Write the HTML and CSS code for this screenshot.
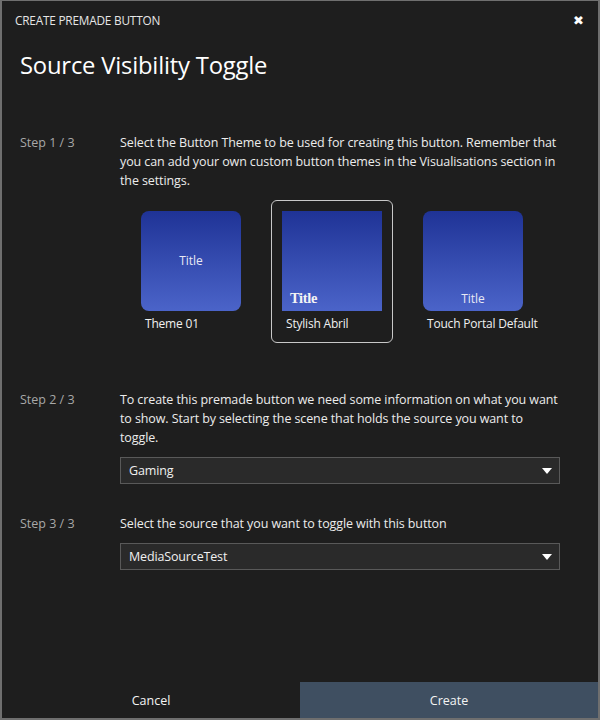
FILE: index.html
```html
<!DOCTYPE html>
<html>
<head>
<meta charset="utf-8">
<link rel="stylesheet" href="styles.css">
</head>
<body>
<div class="window">
  <div class="titlebar">
    <span class="wtitle">CREATE PREMADE BUTTON</span>
    <span class="close">✖</span>
  </div>
  <h1 class="heading">Source Visibility Toggle</h1>
  <div class="content">
    <div class="step step1">
      <div class="label">Step 1 / 3</div>
      <div class="body">
        <p class="text">Select the Button Theme to be used for creating this button. Remember that you can add your own custom button themes in the Visualisations section in the settings.</p>
        <div class="themes">
          <div class="theme">
            <div class="preview rounded center"><span class="ptitle">Title</span></div>
            <div class="tname">Theme 01</div>
          </div>
          <div class="theme selected">
            <div class="preview square abril"><span class="ptitle serif">Title</span></div>
            <div class="tname">Stylish Abril</div>
          </div>
          <div class="theme">
            <div class="preview rounded bottom"><span class="ptitle">Title</span></div>
            <div class="tname">Touch Portal Default</div>
          </div>
        </div>
      </div>
    </div>
    <div class="step step2">
      <div class="label">Step 2 / 3</div>
      <div class="body">
        <p class="text">To create this premade button we need some information on what you want to show. Start by selecting the scene that holds the source you want to toggle.</p>
        <div class="select"><span>Gaming</span><span class="arrow"></span></div>
      </div>
    </div>
    <div class="step step3">
      <div class="label">Step 3 / 3</div>
      <div class="body">
        <p class="text">Select the source that you want to toggle with this button</p>
        <div class="select"><span>MediaSourceTest</span><span class="arrow"></span></div>
      </div>
    </div>
  </div>
  <div class="footer">
    <div class="btn cancel">Cancel</div>
    <div class="btn create">Create</div>
  </div>
</div>
</body>
</html>
```
FILE: styles.css
```css
html, body {
  margin: 0;
  padding: 0;
  background: #6f6f6f;
}
body {
  width: 600px;
  height: 720px;
  font-family: "Open Sans", "Noto Sans", sans-serif;
  color: #f0f0f0;
}
.window {
  box-sizing: border-box;
  width: 600px;
  height: 720px;
  border-style: solid;
  border-color: #6f6f6f;
  border-width: 1px 2px 2px 2px;
  background: #1e1e1e;
  display: flex;
  flex-direction: column;
}
.titlebar {
  height: 38px;
  display: flex;
  align-items: center;
  justify-content: space-between;
  padding: 0 14px 0 13px;
}
.wtitle {
  font-size: 11.8px;
  color: #e6e6e6;
  letter-spacing: -0.2px;
}
.close {
  font-size: 13px;
  color: #fff;
  font-family: "DejaVu Sans", sans-serif;
}
.heading {
  margin: 10px 0 0 18px;
  font-weight: normal;
  font-size: 23.8px;
  letter-spacing: -0.2px;
  height: 32px;
  line-height: 32px;
  color: #fff;
}
.content {
  flex: 1;
  padding-top: 52px;
}
.step {
  display: flex;
}
.label {
  width: 118px;
  padding-left: 18px;
  box-sizing: border-box;
  font-size: 12.5px;
  line-height: 19px;
  color: #a8a8a8;
  flex: none;
}
.body {
  width: 440px;
}
.text {
  margin: 0;
  font-size: 12.5px;
  line-height: 19px;
  color: #ececec;
  letter-spacing: -0.1px;
}
.themes {
  display: flex;
  gap: 19px;
  margin: 10px 0 0 10px;
}
.theme {
  box-sizing: border-box;
  width: 122px;
  height: 143px;
  padding: 10px;
  border: 1px solid transparent;
  border-radius: 6px;
}
.theme.selected {
  border-color: #c8c8c8;
}
.preview {
  width: 100px;
  height: 100px;
  background: linear-gradient(to bottom, #1f3396, #4b64c9);
  display: flex;
  position: relative;
}
.preview.rounded {
  border-radius: 8px;
}
.preview.center {
  align-items: center;
  justify-content: center;
  padding-bottom: 2px;
  box-sizing: border-box;
}
.preview.bottom {
  align-items: flex-end;
  justify-content: center;
  padding-bottom: 4px;
  box-sizing: border-box;
}
.preview.abril {
  align-items: flex-end;
  padding: 0 0 4px 8px;
  box-sizing: border-box;
}
.ptitle {
  font-size: 12px;
  color: #e8e8f4;
}
.ptitle.serif {
  font-family: "Liberation Serif", "DejaVu Serif", serif;
  font-weight: bold;
  font-size: 14.5px;
  letter-spacing: -0.3px;
  color: #f4f4f4;
}
.tname {
  margin-top: 5px;
  padding-left: 4px;
  font-size: 12px;
  line-height: 16px;
  color: #f0f0f0;
  white-space: nowrap;
  letter-spacing: -0.2px;
}
.step2 {
  margin-top: 47px;
}
.step3 {
  margin-top: 30px;
}
.select {
  box-sizing: border-box;
  margin-top: 10px;
  height: 27px;
  border: 1px solid #595959;
  background: #2a2a2a;
  display: flex;
  align-items: center;
  justify-content: space-between;
  padding: 0 7px 0 8px;
  font-size: 12.5px;
  color: #f0f0f0;
  letter-spacing: -0.15px;
}
.arrow {
  width: 0;
  height: 0;
  border-left: 5px solid transparent;
  border-right: 5px solid transparent;
  border-top: 6px solid #fff;
}
.footer {
  display: flex;
  height: 36px;
}
.btn {
  flex: 1;
  display: flex;
  align-items: center;
  justify-content: center;
  font-size: 12.5px;
  color: #f4f4f4;
}
.create {
  background: #3f4f61;
}
```
